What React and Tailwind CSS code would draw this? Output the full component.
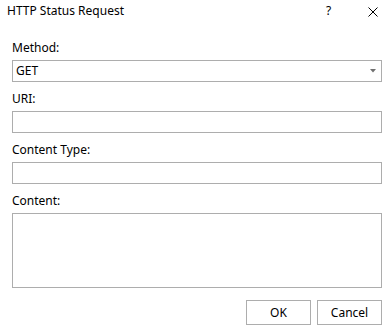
import React from "react";

const Field = ({ label, children }) => (
  <div className="flex flex-col">
    <label className="h-4 leading-4 mb-1">{label}</label>
    {children}
  </div>
);

const App = () => {
  return (
    <div
      className="w-[392px] h-[333px] bg-white text-black text-[12px] flex flex-col"
      style={{ fontFamily: '"Noto Sans", "Open Sans", sans-serif' }}
    >
      <div className="h-[40px] flex items-start pt-[3px] pl-[7px] relative">
        <span className="leading-4">HTTP Status Request</span>
        <span className="absolute left-[326px] top-[3px] leading-4">?</span>
        <svg
          className="absolute left-[368px] top-[7px]"
          width="10"
          height="10"
          viewBox="0 0 10 10"
        >
          <path d="M0.5 0.5 L9.5 9.5 M9.5 0.5 L0.5 9.5" stroke="#000" strokeWidth="1" />
        </svg>
      </div>
      <div className="pl-[12px] pr-[10px] flex flex-col gap-[9px]">
        <Field label="Method:">
          <div className="h-[22px] border border-[#adadad] flex items-center justify-between pl-[3px] pr-[5px]">
            <span>GET</span>
            <svg width="6" height="4" viewBox="0 0 6 4">
              <path d="M0 0 H6 L3 3.5 Z" fill="#707070" />
            </svg>
          </div>
        </Field>
        <Field label="URI:">
          <input className="h-[22px] border border-[#adadad] outline-none px-1" />
        </Field>
        <Field label="Content Type:">
          <input className="h-[22px] border border-[#adadad] outline-none px-1" />
        </Field>
        <Field label="Content:">
          <textarea className="h-[75px] border border-[#adadad] outline-none resize-none px-1" />
        </Field>
      </div>
      <div className="flex justify-end gap-[6px] pr-[10px] mt-[12px]">
        <button className="w-[65px] h-[25px] border border-[#adadad] bg-white">OK</button>
        <button className="w-[65px] h-[25px] border border-[#adadad] bg-white">Cancel</button>
      </div>
    </div>
  );
};

export default App;
